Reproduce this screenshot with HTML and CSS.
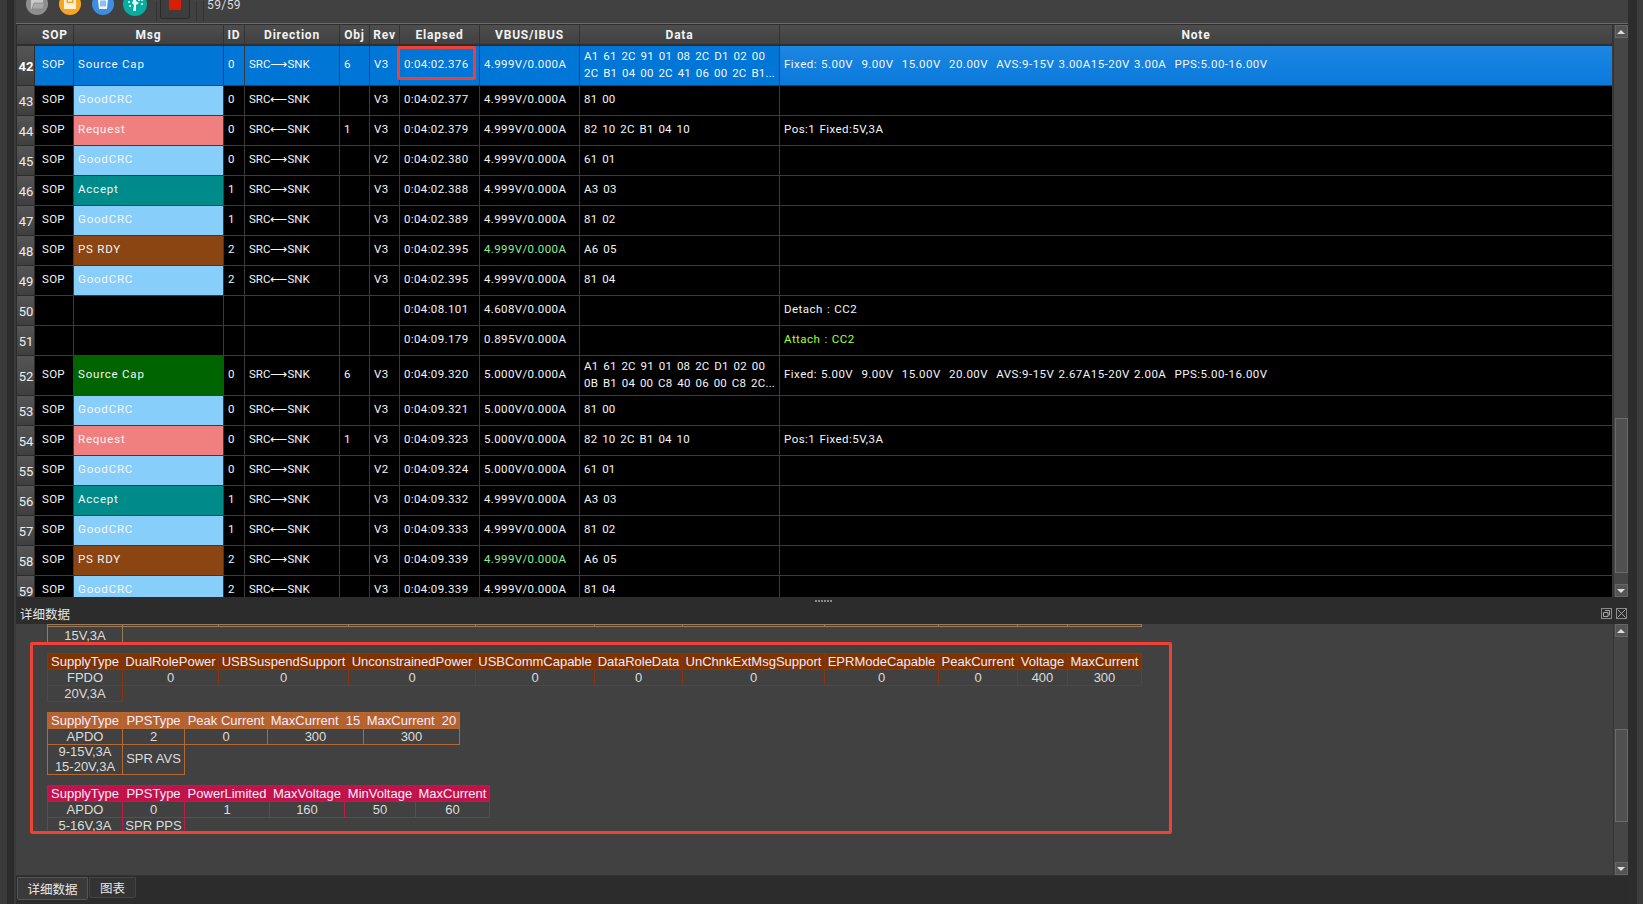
FILE: index.html
```html
<!DOCTYPE html>
<html lang="zh">
<head>
<meta charset="utf-8">
<title>PD Analyzer</title>
<link rel="stylesheet" href="styles.css">
</head>
<body>
<div class="app">
  <div class="edge-left"></div>
  <main class="main">
    <header class="toolbar">
      <svg class="tool" viewBox="0 0 22 22"><circle cx="11" cy="11" r="11" fill="#8f8f8f"/><path d="M5 4h6l2 2h4v10H5z" fill="#c9c9c9"/><path d="M6 16l2-6h11l-2 6z" fill="#a8a8a8" stroke="#7a7a7a" stroke-width=".6"/></svg>
      <svg class="tool" viewBox="0 0 22 22"><circle cx="11" cy="11" r="11" fill="#f6a623"/><path d="M5 0h12v16H5z" fill="#fdf0d5"/><path d="M7.500 4h7v6h-7z" fill="#f6a623"/><path d="M9 5.500h4v3H9z" fill="#fdf0d5"/></svg>
      <svg class="tool" viewBox="0 0 22 22"><circle cx="11" cy="11" r="11" fill="#3f8ee0"/><path d="M5 5h12v1.500h-1L15 16H7L6 6.500H5z" fill="#f4f8fd"/><path d="M9 7.500v6M11 7.500v6M13 7.500v6" stroke="#3f8ee0" stroke-width="1.100"/></svg>
      <svg class="tool tool-teal" viewBox="0 0 24 24"><circle cx="12" cy="12" r="12" fill="#07ad9f"/><path d="M10 3h3v6l3 2-3 2v6h-3l1-6-2-2 1-2z" fill="#eafaf7"/><path d="M15 4h2v2h-2zM18 7h2v2h-2zM15 8h2v1h-2zM18 11h2v2h-2zM5 9h2v2H5zM6 13h2v2H6z" fill="#c6f3ec"/></svg>
      <span class="tool-sep"></span>
      <button class="stop" type="button"><span class="stop-mark"></span></button>
      <span class="tool-sep tool-sep-a"></span>
      <span class="tool-sep tool-sep-b"></span>
      <span class="count">59/59</span>
    </header>
    <div class="divider"></div>
    <section class="grid-area">
      <div class="grid-wrap">
        <table class="grid">
          <colgroup>
            <col class="w-num"><col class="w-sop"><col class="w-msg"><col class="w-id"><col class="w-dir"><col class="w-obj"><col class="w-rev"><col class="w-ela"><col class="w-vbus"><col class="w-data"><col class="w-note">
          </colgroup>
          <thead>
            <tr><th></th><th class="h-sop">SOP</th><th>Msg</th><th>ID</th><th>Direction</th><th>Obj</th><th>Rev</th><th>Elapsed</th><th>VBUS/IBUS</th><th>Data</th><th>Note</th></tr>
          </thead>
          <tbody>
            <tr class="tall selected"><th class="num cur">42</th><td>SOP</td><td>Source Cap</td><td>0</td><td>SRC⟶SNK</td><td>6</td><td>V3</td><td>0:04:02.376</td><td>4.999V/0.000A</td><td class="data">A1 61 2C 91 01 08 2C D1 02 00<br>2C B1 04 00 2C 41 06 00 2C B1...</td><td class="note note-sel">Fixed: 5.00V&nbsp; 9.00V&nbsp; 15.00V&nbsp; 20.00V&nbsp; AVS:9-15V 3.00A15-20V 3.00A&nbsp; PPS:5.00-16.00V</td></tr>
            <tr><th class="num">43</th><td>SOP</td><td class="good">GoodCRC</td><td>0</td><td>SRC⟵SNK</td><td></td><td>V3</td><td>0:04:02.377</td><td>4.999V/0.000A</td><td class="data">81 00</td><td></td></tr>
            <tr><th class="num">44</th><td>SOP</td><td class="req">Request</td><td>0</td><td>SRC⟵SNK</td><td>1</td><td>V3</td><td>0:04:02.379</td><td>4.999V/0.000A</td><td class="data">82 10 2C B1 04 10</td><td class="note">Pos:1 Fixed:5V,3A</td></tr>
            <tr><th class="num">45</th><td>SOP</td><td class="good">GoodCRC</td><td>0</td><td>SRC⟶SNK</td><td></td><td>V2</td><td>0:04:02.380</td><td>4.999V/0.000A</td><td class="data">61 01</td><td></td></tr>
            <tr><th class="num">46</th><td>SOP</td><td class="acc">Accept</td><td>1</td><td>SRC⟶SNK</td><td></td><td>V3</td><td>0:04:02.388</td><td>4.999V/0.000A</td><td class="data">A3 03</td><td></td></tr>
            <tr><th class="num">47</th><td>SOP</td><td class="good">GoodCRC</td><td>1</td><td>SRC⟵SNK</td><td></td><td>V3</td><td>0:04:02.389</td><td>4.999V/0.000A</td><td class="data">81 02</td><td></td></tr>
            <tr><th class="num">48</th><td>SOP</td><td class="rdy">PS RDY</td><td>2</td><td>SRC⟶SNK</td><td></td><td>V3</td><td>0:04:02.395</td><td class="lime">4.999V/0.000A</td><td class="data">A6 05</td><td></td></tr>
            <tr><th class="num">49</th><td>SOP</td><td class="good">GoodCRC</td><td>2</td><td>SRC⟵SNK</td><td></td><td>V3</td><td>0:04:02.395</td><td>4.999V/0.000A</td><td class="data">81 04</td><td></td></tr>
            <tr><th class="num">50</th><td></td><td></td><td></td><td></td><td></td><td></td><td>0:04:08.101</td><td>4.608V/0.000A</td><td></td><td class="note">Detach : CC2</td></tr>
            <tr><th class="num">51</th><td></td><td></td><td></td><td></td><td></td><td></td><td>0:04:09.179</td><td>0.895V/0.000A</td><td></td><td class="note attach">Attach : CC2</td></tr>
            <tr class="tall"><th class="num">52</th><td>SOP</td><td class="src">Source Cap</td><td>0</td><td>SRC⟶SNK</td><td>6</td><td>V3</td><td>0:04:09.320</td><td>5.000V/0.000A</td><td class="data">A1 61 2C 91 01 08 2C D1 02 00<br>0B B1 04 00 C8 40 06 00 C8 2C...</td><td class="note">Fixed: 5.00V&nbsp; 9.00V&nbsp; 15.00V&nbsp; 20.00V&nbsp; AVS:9-15V 2.67A15-20V 2.00A&nbsp; PPS:5.00-16.00V</td></tr>
            <tr><th class="num">53</th><td>SOP</td><td class="good">GoodCRC</td><td>0</td><td>SRC⟵SNK</td><td></td><td>V3</td><td>0:04:09.321</td><td>5.000V/0.000A</td><td class="data">81 00</td><td></td></tr>
            <tr><th class="num">54</th><td>SOP</td><td class="req">Request</td><td>0</td><td>SRC⟵SNK</td><td>1</td><td>V3</td><td>0:04:09.323</td><td>5.000V/0.000A</td><td class="data">82 10 2C B1 04 10</td><td class="note">Pos:1 Fixed:5V,3A</td></tr>
            <tr><th class="num">55</th><td>SOP</td><td class="good">GoodCRC</td><td>0</td><td>SRC⟶SNK</td><td></td><td>V2</td><td>0:04:09.324</td><td>5.000V/0.000A</td><td class="data">61 01</td><td></td></tr>
            <tr><th class="num">56</th><td>SOP</td><td class="acc">Accept</td><td>1</td><td>SRC⟶SNK</td><td></td><td>V3</td><td>0:04:09.332</td><td>4.999V/0.000A</td><td class="data">A3 03</td><td></td></tr>
            <tr><th class="num">57</th><td>SOP</td><td class="good">GoodCRC</td><td>1</td><td>SRC⟵SNK</td><td></td><td>V3</td><td>0:04:09.333</td><td>4.999V/0.000A</td><td class="data">81 02</td><td></td></tr>
            <tr><th class="num">58</th><td>SOP</td><td class="rdy">PS RDY</td><td>2</td><td>SRC⟶SNK</td><td></td><td>V3</td><td>0:04:09.339</td><td class="lime">4.999V/0.000A</td><td class="data">A6 05</td><td></td></tr>
            <tr><th class="num">59</th><td>SOP</td><td class="good">GoodCRC</td><td>2</td><td>SRC⟵SNK</td><td></td><td>V3</td><td>0:04:09.339</td><td>4.999V/0.000A</td><td class="data">81 04</td><td></td></tr>
          </tbody>
        </table>
        <div class="cell-mark"></div>
      </div>
      <div class="scroll">
        <div class="sb-btn"><span class="tri-up"></span></div>
        <div class="sb-track sb-track-a"></div>
        <div class="sb-thumb sb-thumb-a"></div>
        <div class="sb-track sb-rest"></div>
        <div class="sb-btn"><span class="tri-down"></span></div>
      </div>
    </section>
    <div class="dock-title">
      <span class="grip"></span>
      <span class="dock-name">详细数据</span>
      <span class="dock-icons">
        <svg class="dock-icon" viewBox="0 0 11 11"><rect x=".5" y=".5" width="10" height="10" fill="none" stroke="#8a8a8a"/><path d="M4 2.500h4.500V7H7M2.500 4.500H7V8.500H2.500z" fill="none" stroke="#a5a5a5"/></svg>
        <svg class="dock-icon" viewBox="0 0 11 11"><rect x=".5" y=".5" width="10" height="10" fill="none" stroke="#8a8a8a"/><path d="M1.500 1.500l8 8M9.500 1.500l-8 8" stroke="#a5a5a5"/></svg>
      </span>
    </div>
    <section class="panel">
      <div class="panel-body">
        <table class="pd pd-a pd-stub">
          <colgroup><col class="a1"><col class="a2"><col class="a3"><col class="a4"><col class="a5"><col class="a6"><col class="a7"><col class="a8"><col class="a9"><col class="a10"><col class="a11"></colgroup>
          <tr class="stub-top"><td></td><td></td><td></td><td></td><td></td><td></td><td></td><td></td><td></td><td></td><td></td></tr>
          <tr><td class="open">15V,3A</td></tr>
        </table>
        <table class="pd pd-b">
          <colgroup><col class="a1"><col class="a2"><col class="a3"><col class="a4"><col class="a5"><col class="a6"><col class="a7"><col class="a8"><col class="a9"><col class="a10"><col class="a11"></colgroup>
          <tr class="pd-head"><td>SupplyType</td><td>DualRolePower</td><td>USBSuspendSupport</td><td>UnconstrainedPower</td><td>USBCommCapable</td><td>DataRoleData</td><td>UnChnkExtMsgSupport</td><td>EPRModeCapable</td><td>PeakCurrent</td><td>Voltage</td><td>MaxCurrent</td></tr>
          <tr><td>FPDO</td><td>0</td><td>0</td><td>0</td><td>0</td><td>0</td><td>0</td><td>0</td><td>0</td><td>400</td><td>300</td></tr>
          <tr><td>20V,3A</td></tr>
        </table>
        <table class="pd pd-c">
          <colgroup><col class="a1"><col class="c2"><col class="c3"><col class="c4"><col class="c5"></colgroup>
          <tr class="pd-head"><td>SupplyType</td><td>PPSType</td><td>Peak Current</td><td>MaxCurrent&nbsp; 15</td><td>MaxCurrent&nbsp; 20</td></tr>
          <tr><td>APDO</td><td>2</td><td>0</td><td>300</td><td>300</td></tr>
          <tr class="two"><td>9-15V,3A<br>15-20V,3A</td><td>SPR AVS</td></tr>
        </table>
        <table class="pd pd-d">
          <colgroup><col class="a1"><col class="c2"><col class="d3"><col class="d4"><col class="d5"><col class="d6"></colgroup>
          <tr class="pd-head"><td>SupplyType</td><td>PPSType</td><td>PowerLimited</td><td>MaxVoltage</td><td>MinVoltage</td><td>MaxCurrent</td></tr>
          <tr><td>APDO</td><td>0</td><td>1</td><td>160</td><td>50</td><td>60</td></tr>
          <tr><td>5-16V,3A</td><td>SPR PPS</td></tr>
        </table>
        <div class="annot"></div>
      </div>
      <div class="scroll">
        <div class="sb-btn"><span class="tri-up"></span></div>
        <div class="sb-track sb-track-b"></div>
        <div class="sb-thumb sb-thumb-b"></div>
        <div class="sb-track sb-rest"></div>
        <div class="sb-btn"><span class="tri-down"></span></div>
      </div>
    </section>
    <nav class="tabs">
      <span class="tab tab-on">详细数据</span>
      <span class="tab">图表</span>
    </nav>
  </main>
  <div class="edge-right"></div>
</div>
</body>
</html>
```
FILE: styles.css
```css
* { box-sizing: border-box; }
html, body { margin: 0; height: 100%; overflow: hidden; background: #2c2c2c; }
.app { display: flex; width: 1643px; height: 904px; font-family: Roboto, "Noto Sans CJK SC", sans-serif; color: #fff; }
.edge-left { width: 16px; background: linear-gradient(90deg, #3a3a3a 0 7px, #2b2b2b 7px 14px, #3a3a3a 14px); }
.edge-right { width: 15px; background: linear-gradient(90deg, #2d2d2d 0 9px, #3c3c3c 9px); }
.main { width: 1612px; display: flex; flex-direction: column; }

.toolbar { height: 23px; flex: none; display: flex; align-items: flex-end; padding: 0 0 8px 10px; background: #414141; overflow: hidden; }
.tool { width: 22px; height: 22px; flex: none; margin: 0 11px 0 0; }
.tool-teal { width: 24px; height: 24px; margin: 0 0 -1px -2px; }
.tool-sep { width: 1px; height: 20px; margin: 0 0 -6px 9px; background: #333; flex: none; }
.stop { width: 30px; height: 25px; margin: 0 0 -4px 3px; padding: 0; display: flex; align-items: flex-end; justify-content: center; flex: none; background: #3d3d3d; border: 1px solid #2a2a2a; border-radius: 2px; }
.stop-mark { width: 12px; height: 14px; margin-bottom: 8px; background: #d81e06; }
.tool-sep-a { margin-left: 6px; }
.tool-sep-b { margin-left: 6px; }
.count { margin: 0 0 4px 3px; font-size: 12px; line-height: 11px; letter-spacing: .4px; color: #ddd; }
.divider { height: 2px; flex: none; background: linear-gradient(#6b6b6b 0 1px, #2d2d2d 1px); }

.grid-area { height: 572px; flex: none; display: flex; }
.grid-wrap { position: relative; width: 1597px; height: 572px; margin: 0; padding-left: 1px; overflow: hidden; background: #2c2c2c; flex: none; }
.grid { table-layout: fixed; width: 1596px; border-collapse: separate; border-spacing: 0; background: #000; font-size: 11.500px; }
.w-num { width: 18px; } .w-sop { width: 39px; } .w-msg { width: 150px; } .w-id { width: 21px; } .w-dir { width: 95px; } .w-obj { width: 30px; } .w-rev { width: 30px; } .w-ela { width: 80px; } .w-vbus { width: 100px; } .w-data { width: 200px; } .w-note { width: 833px; }
.grid thead th { height: 20px; padding: 1px 0 0; font: 700 12px/18px Roboto, sans-serif; letter-spacing: .8px; color: #f2f2f2; background: linear-gradient(#4d4d4d, #414141); border-right: 1px solid #333; border-bottom: 2px solid #2e2e2e; text-align: center; white-space: nowrap; overflow: hidden; }
.grid thead th:first-child { border-right: 0; }
.grid .h-sop { padding-left: 2px; }
.grid tbody tr { height: 30px; }
.grid tbody tr.tall { height: 40px; }
.grid td { padding: 0 2px 2px 4px; line-height: 16.500px; white-space: nowrap; overflow: hidden; border-right: 1px solid #3a3a3a; border-bottom: 1px solid #3a3a3a; letter-spacing: .38px; color: #f5f5f5; }
.grid td:nth-child(2) { padding-left: 7px; letter-spacing: .3px; }
.grid td:nth-child(5) { letter-spacing: 0; }
.grid .num { padding: 3px 0 0 1px; font: 400 13px/18px Roboto, sans-serif; color: #eee; background: linear-gradient(#555, #3f3f3f); border-right: 1px solid #2c2c2c; border-bottom: 1px solid #2c2c2c; }
.grid .cur { font-weight: 700; color: #fff; }
.grid .data { word-spacing: 1.800px; letter-spacing: .2px; }
.grid .note { letter-spacing: .47px; word-spacing: .8px; }
.selected td { background: #0076d6; }
.grid .note-sel { background: linear-gradient(#1c86e2, #0a7adb); }
.good { background: #87cefa; }
.req { background: #f08080; }
.acc { background: #008b8b; }
.rdy { background: #8b4513; }
.src { background: #006400; }
.grid td:nth-child(3) { letter-spacing: .8px; }
.grid td.lime { color: #90ee90; }
.grid td.attach { color: #adff2f; }
.cell-mark { position: absolute; left: 381px; top: 21px; width: 79px; height: 34px; border: 3px solid #ef4136; border-radius: 2px; }

.scroll { width: 15px; flex: none; display: flex; flex-direction: column; align-items: center; background: #464646; border-left: 1px solid #353535; }
.sb-btn { width: 13px; height: 13px; flex: none; display: flex; align-items: center; justify-content: center; background: #555; border: 1px solid #666; }
.tri-up { width: 0; height: 0; border: 4px solid transparent; border-top: 0; border-bottom: 4px solid #ddd; }
.tri-down { width: 0; height: 0; border: 4px solid transparent; border-bottom: 0; border-top: 4px solid #ddd; }
.sb-track { flex: none; width: 13px; }
.sb-track-a { height: 380px; }
.sb-thumb { flex: none; width: 13px; background: #505050; border: 1px solid #6b6b6b; }
.sb-thumb-a { height: 155px; }
.sb-rest { flex: 1; }
.sb-track-b { height: 92px; }
.sb-thumb-b { height: 93px; }

.dock-title { height: 27px; flex: none; display: flex; align-items: center; position: relative; background: #2c2c2c; padding: 7px 0 0 4px; }
.grip { position: absolute; left: 799px; top: 3px; width: 17px; height: 2px; background: repeating-linear-gradient(90deg, #8a8a8a 0 2px, transparent 2px 3px); }
.dock-name { font: 12.500px/16px "Noto Sans CJK SC", sans-serif; color: #e6e6e6; }
.dock-icons { margin-left: auto; margin-right: 1px; display: flex; gap: 4px; padding-bottom: 2px; }
.dock-icon { width: 11px; height: 11px; display: block; }

.panel { height: 251px; flex: none; display: flex; background: #414141; }
.panel-body { position: relative; width: 1597px; flex: none; padding-left: 31px; overflow: hidden; }
.pd { table-layout: fixed; border-collapse: collapse; margin-bottom: 10px; font: 13px/15px "Liberation Sans", Arial, sans-serif; color: #ddd; }
.pd td { padding: 0; text-align: center; white-space: nowrap; overflow: hidden; border: 1px solid currentColor; height: 16px; color: inherit; }
.pd-a { width: 1094px; border-color: #9a7a58; }
.pd-a td { border-color: #9a7a58; }
.stub-top td { height: 2px; font-size: 0; line-height: 0; border-bottom: 1px solid #9a7a58; }
.pd-stub .open { border-bottom: 0; border-top: 0; padding-top: 1px; }
.pd-stub tr:last-child td { height: 15px; }
.a1 { width: 75px; } .a2 { width: 96px; } .a3 { width: 130px; } .a4 { width: 127px; } .a5 { width: 119px; } .a6 { width: 88px; } .a7 { width: 142px; } .a8 { width: 114px; } .a9 { width: 79px; } .a10 { width: 50px; } .a11 { width: 74px; }
.c2 { width: 62px; } .c3 { width: 83px; } .c4 { width: 96px; } .c5 { width: 96px; }
.d3 { width: 85px; } .d4 { width: 75px; } .d5 { width: 71px; } .d6 { width: 74px; }
.pd-b { width: 1094px; }
.pd-b td { border-color: #85360a; }
.pd-b .pd-head td { background: #7f3300; color: #f1e9ff; }
.pd-c { width: 412px; }
.pd-c td { border-color: #b5682f; }
.pd-c .pd-head td { background: #b5622f; color: #f5ecff; }
.pd-d { width: 442px; margin-bottom: 0; }
.pd-d td { border-color: #c0174c; }
.pd-d .pd-head td { background: #c2124a; color: #f8ecff; }
.pd-head td { height: 16px; }
.pd .two td { height: 29px; line-height: 14.500px; }
.annot { position: absolute; left: 14px; top: 18px; width: 1142px; height: 192px; border: 3px solid #ef4136; border-radius: 2px; }

.tabs { flex: 1; display: flex; gap: 1px; align-items: flex-start; padding: 1px 0 0 1px; background: #2c2c2c; border-top: 1px solid #333; }
.tab { height: 21px; padding: 0 10px; display: flex; align-items: center; white-space: nowrap; font: 12.500px/16px "Noto Sans CJK SC", sans-serif; color: #e8e8e8; background: #333; border: 1px solid #444; border-radius: 0 0 2px 2px; }
.tab-on { height: 23px; width: 71px; padding: 0; justify-content: center; background: #3a3a3a; border-color: #555; }
```
